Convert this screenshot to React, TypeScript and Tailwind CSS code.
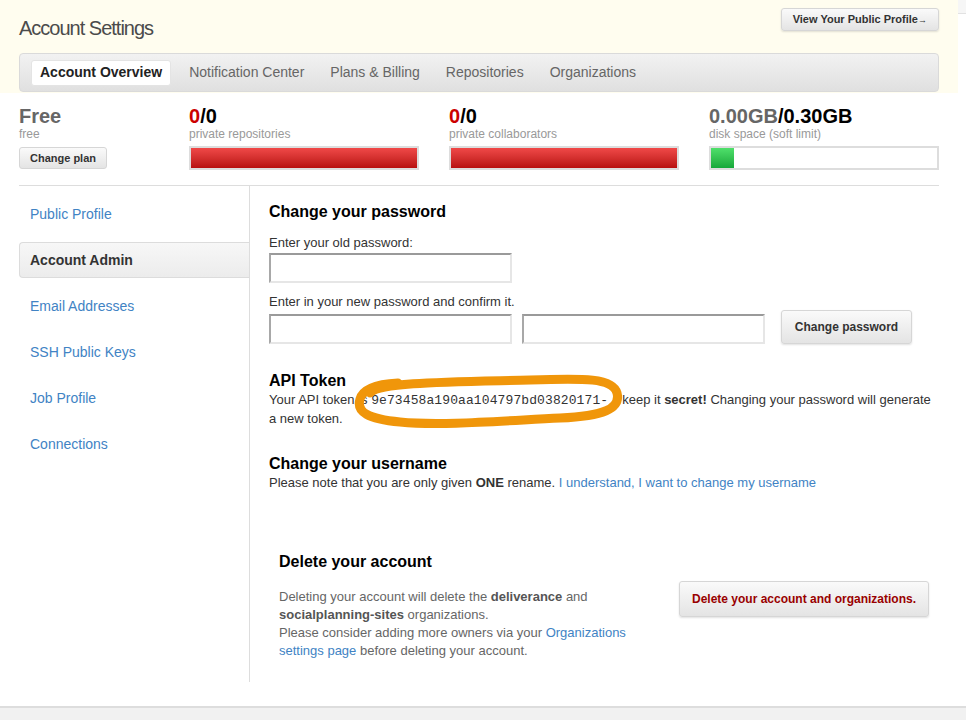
import React from "react";

const tabs = ["Account Overview", "Notification Center", "Plans & Billing", "Repositories", "Organizations"];
const sideLinks = ["Public Profile", "Account Admin", "Email Addresses", "SSH Public Keys", "Job Profile", "Connections"];

function UsageBar({ pct, green }: { pct: number; green?: boolean }) {
  return (
    <div className="h-[24px] border-2 border-[#dddddd] bg-white">
      <div
        className={
          green
            ? "h-full bg-gradient-to-b from-[#4fe06b] to-[#14a83a]"
            : "h-full bg-gradient-to-b from-[#f04848] to-[#b80f0f]"
        }
        style={{ width: `${pct}%` }}
      />
    </div>
  );
}

function Stat({ used, total, label, pct, green, usedGray }: {
  used: string; total: string; label: string; pct: number; green?: boolean; usedGray?: boolean;
}) {
  return (
    <div className="flex flex-col">
      <div className="text-[20px] font-bold leading-[22px]">
        <span className={usedGray ? "text-[#666]" : "text-[#cc0000]"}>{used}</span>
        <span className="text-black">{total}</span>
      </div>
      <div className="text-[12px] leading-[14px] text-[#999]">{label}</div>
      <div className="mt-[5px]">
        <UsageBar pct={pct} green={green} />
      </div>
    </div>
  );
}

function GrayButton({ children, className = "" }: { children: React.ReactNode; className?: string }) {
  return (
    <button
      className={
        "rounded-[3px] border border-[#d6d6d6] bg-gradient-to-b from-[#fafafa] to-[#e4e4e4] font-bold shadow-[0_1px_2px_rgba(0,0,0,0.12)] " +
        className
      }
    >
      {children}
    </button>
  );
}

function PwInput({ className = "" }: { className?: string }) {
  return (
    <input
      type="password"
      className={
        "h-[30px] w-[243px] border-2 border-t-[#9a9a9a] border-l-[#a8a8a8] border-r-[#e6e6e6] border-b-[#e6e6e6] bg-white outline-none " +
        className
      }
    />
  );
}

export default function App() {
  return (
    <div className="relative min-h-[720px] w-[966px] overflow-hidden bg-white font-['Liberation_Sans',Arial,sans-serif] text-[#333]">
      {/* top band */}
      <div className="flex">
        <div className="w-[958px] bg-[#fffdef] px-[19px] pb-[1px] pt-[8px]">
          <div className="flex items-start justify-between">
            <h1 className="mt-[10px] text-[20px] leading-[20px] tracking-[-1px] text-[#4b4b4b]">Account Settings</h1>
            <GrayButton className="h-[23px] px-[11px] text-[11px] text-[#333]">
              View Your Public Profile<span className="text-[9px]">→</span>
            </GrayButton>
          </div>
          <div className="mt-[15px] flex h-[39px] items-center gap-[10px] rounded-[4px] border border-[#dadada] bg-gradient-to-b from-[#f2f2f2] to-[#e0e0e0] pl-[11px]">
            {tabs.map((t, i) => (
              <div
                key={t}
                className={
                  i === 0
                    ? "flex h-[26px] items-center rounded-[3px] border border-[#e4e4e4] bg-white px-[8px] text-[14px] font-bold text-[#222]"
                    : "flex h-[26px] items-center px-[8px] text-[14px] text-[#666]"
                }
              >
                {t}
              </div>
            ))}
          </div>
        </div>
        <div className="flex-1">
          <div className="h-[14px] border-b border-[#e2e2e2] bg-[#f6f6f6]" />
        </div>
      </div>

      {/* plan / usage stats */}
      <div className="mx-[19px] mt-[12px] grid w-[920px] grid-cols-[140px_230px_230px_230px] gap-x-[30px] border-b border-[#dddddd] pb-[15px]">
        <div className="flex flex-col">
          <div className="text-[20px] font-bold leading-[22px] text-[#666]">Free</div>
          <div className="text-[12px] leading-[14px] text-[#999]">free</div>
          <GrayButton className="mt-[6px] h-[22px] w-[88px] text-[11px] text-[#333] shadow-none">Change plan</GrayButton>
        </div>
        <Stat used="0" total="/0" label="private repositories" pct={100} />
        <Stat used="0" total="/0" label="private collaborators" pct={100} />
        <Stat used="0.00GB" total="/0.30GB" label="disk space (soft limit)" pct={10} green usedGray />
      </div>

      {/* body */}
      <div className="ml-[19px] flex w-[920px]">
        <div className="w-[231px] shrink-0 border-r border-[#dddddd] pt-[10px] pb-[30px]">
          {sideLinks.map((l, i) => (
            <div
              key={l}
              className={
                i === 1
                  ? "mb-[10px] flex h-[36px] items-center rounded-l-[4px] border border-r-0 border-[#dcdcdc] bg-gradient-to-b from-[#f7f7f7] to-[#ececec] pl-[10px] text-[14px] font-bold text-[#333]"
                  : "mb-[10px] flex h-[36px] items-center pl-[11px] text-[14px] text-[#4183c4]"
              }
            >
              {l}
            </div>
          ))}
        </div>

        <div className="flex-1 pb-[12px] pl-[19px] pt-[16px] text-[13px] leading-[18px] text-[#333]">
          <h3 className="text-[16px] font-bold leading-[20px] text-black">Change your password</h3>
          <div className="mt-[12px]">Enter your old password:</div>
          <PwInput className="mt-[1px] block" />
          <div className="mt-[10px]">Enter in your new password and confirm it.</div>
          <div className="-mt-[1px] flex items-end">
            <PwInput />
            <PwInput className="ml-[10px]" />
            <GrayButton className="ml-[16px] h-[34px] w-[131px] text-[12px] text-[#333]">Change password</GrayButton>
          </div>

          <h3 className="mt-[27px] text-[16px] font-bold leading-[20px] text-black">API Token</h3>
          <p className="w-[669px]">
            Your API token is{" "}
            <code className="mr-[14px] font-['Liberation_Mono',monospace] text-[13px] tracking-[0.1px]">9e73458a190aa104797bd03820171-</code>
            keep it <b>secret!</b> Changing your password will generate a new token.
          </p>

          <h3 className="mt-[26px] text-[16px] font-bold leading-[20px] text-black">Change your username</h3>
          <p>
            Please note that you are only given <b>ONE</b> rename.{" "}
            <span className="text-[#4183c4]">I understand, I want to change my username</span>
          </p>

          <div className="mt-[50px] w-[670px] p-[10px]">
            <h3 className="text-[16px] font-bold leading-[20px] text-black">Delete your account</h3>
            <div className="mt-[9px] flex items-start justify-between">
              <p className="w-[360px] pt-[7px] text-[#666]">
                Deleting your account will delete the <b className="text-[#555]">deliverance</b> and{" "}
                <b className="text-[#555]">socialplanning-sites</b> organizations.
                <br />
                Please consider adding more owners via your{" "}
                <span className="text-[#4183c4]">Organizations settings page</span> before deleting your account.
              </p>
              <GrayButton className="h-[36px] w-[250px] text-[12px] text-[#990000]">
                Delete your account and organizations.
              </GrayButton>
            </div>
          </div>
        </div>
      </div>

      {/* footer strip */}
      <div className="absolute bottom-0 left-0 h-[14px] w-[966px] border-t-2 border-[#dddddd] bg-[#f1f1f1]" />

      {/* hand-drawn highlight around the token */}
      <svg className="pointer-events-none absolute left-0 top-0" width="966" height="720" viewBox="0 0 966 720">
        <path
          d="M370 393 C380 382 450 382 530 380 C585 378 613 378 617 393 C621 409 603 416 560 418 C500 421 440 426 400 422 C368 419 356 412 360 399 C363 389 377 384 398 383"
          fill="none"
          stroke="#f0960a"
          strokeWidth="9"
          strokeLinecap="round"
          strokeLinejoin="round"
        />
      </svg>
    </div>
  );
}
